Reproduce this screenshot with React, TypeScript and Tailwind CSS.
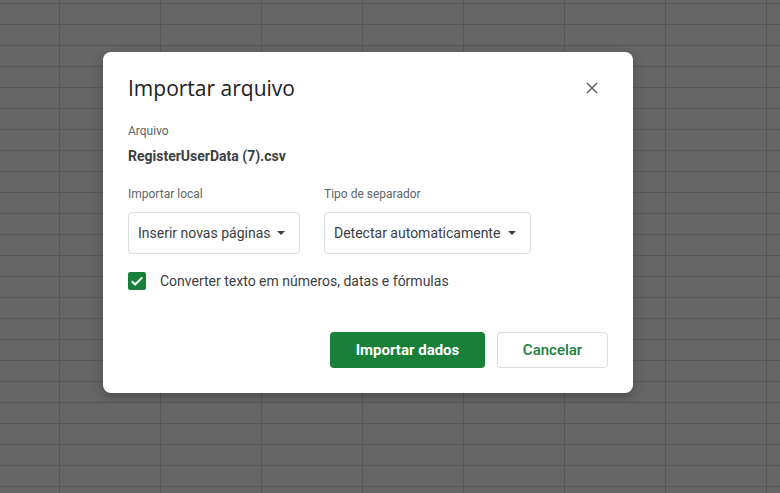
import React from "react";

const Caret = () => (
  <svg width="8" height="4" viewBox="0 0 8 4" className="shrink-0">
    <path d="M0 0 L8 0 L4 4 Z" fill="#3c4043" />
  </svg>
);

const Select = ({ label, value, width }: { label: string; value: string; width: string }) => (
  <div className="flex flex-col">
    <p className="text-[12px] leading-[16px] text-[#5f6368]">{label}</p>
    <div
      className={`mt-[10px] h-[42px] ${width} flex items-center justify-between pl-[9px] pr-[14px] border border-[#dadce0] rounded-[4px] text-[14px] text-[#3c4043]`}
    >
      <span>{value}</span>
      <Caret />
    </div>
  </div>
);

export default function App() {
  return (
    <div
      className="w-[780px] h-[493px] overflow-hidden pt-[52px] pl-[103px] bg-[#666666] bg-[linear-gradient(to_right,#585858_1px,transparent_1px),linear-gradient(to_bottom,#585858_1px,transparent_1px)] bg-[size:101px_21px] bg-[position:59px_3px]"
      style={{ fontFamily: "Roboto, 'Liberation Sans', sans-serif" }}
    >
      <div className="w-[530px] h-[341px] bg-white rounded-[8px] shadow-[0_4px_12px_rgba(0,0,0,0.25)] px-[25px] pt-[22px] flex flex-col">
        <div className="h-[28px] flex items-center justify-between">
          <h1
            className="text-[21px] leading-[28px] text-[#202124]"
            style={{ fontFamily: "'Open Sans', Roboto, sans-serif" }}
          >
            Importar arquivo
          </h1>
          <button className="w-[32px] h-[32px] flex items-center justify-center">
            <svg width="12" height="12" viewBox="0 0 12 12">
              <path d="M1 1 L11 11 M11 1 L1 11" stroke="#5f6368" strokeWidth="1.6" />
            </svg>
          </button>
        </div>

        <p className="mt-[21px] text-[12px] leading-[16px] text-[#5f6368]">Arquivo</p>
        <p className="mt-[7px] text-[14px] leading-[20px] font-bold text-[#3c4043]">RegisterUserData (7).csv</p>

        <div className="mt-[20px] flex gap-[24px]">
          <Select label="Importar local" value="Inserir novas páginas" width="w-[172px]" />
          <Select label="Tipo de separador" value="Detectar automaticamente" width="w-[207px]" />
        </div>

        <label className="mt-[17px] flex items-center gap-[14px]">
          <span className="w-[18px] h-[18px] rounded-[2px] bg-[#188038] flex items-center justify-center">
            <svg width="18" height="18" viewBox="0 0 18 18">
              <path d="M3.8 9.2 L7.2 12.5 L14.3 5.4" fill="none" stroke="white" strokeWidth="2" />
            </svg>
          </span>
          <span className="text-[14px] leading-[20px] text-[#3c4043]">Converter texto em números, datas e fórmulas</span>
        </label>

        <div className="mt-[41px] flex justify-end gap-[12px] pr-0">
          <button className="w-[155px] h-[36px] rounded-[4px] bg-[#188038] text-white text-[15px] font-bold">
            Importar dados
          </button>
          <button className="w-[111px] h-[36px] rounded-[4px] border border-[#dadce0] bg-white text-[#188038] text-[15px] font-medium">
            Cancelar
          </button>
        </div>
      </div>
    </div>
  );
}
